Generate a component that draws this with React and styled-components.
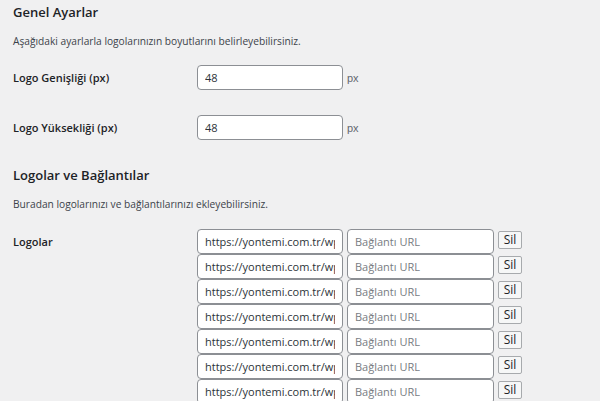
import React from 'react';
import styled, { createGlobalStyle } from 'styled-components';

const Global = createGlobalStyle`
  html, body {
    margin: 0;
    padding: 0;
    background: #f0f0f1;
  }
  body {
    font-family: 'Open Sans', 'Noto Sans', sans-serif;
    color: #1d2327;
    font-size: 10px;
  }
`

const Page = styled.div`
  padding: 2px 13px 0 13px;
`

const Title = styled.h2`
  margin: 0;
  font-size: 13px;
  line-height: 20px;
  font-weight: 600;
  color: #1d2327;
  margin-top: ${p => p.$top || 0}px;
`

const Description = styled.p`
  margin: 11px 0 0 0;
  font-size: 10.2px;
  line-height: 16px;
  color: #3c434a;
`

const Row = styled.div`
  display: flex;
  align-items: center;
  padding: 12px 0 13px 0;
  margin-top: ${p => p.$top || 0}px;
`

const Label = styled.div`
  width: 184px;
  flex-shrink: 0;
  font-size: 11px;
  font-weight: 600;
  color: #1d2327;
`

const Input = styled.input`
  box-sizing: border-box;
  width: ${p => p.$w || 146}px;
  height: 25px;
  margin: 0;
  padding: 0 7px;
  border: 1px solid #8c8f94;
  border-radius: 4px;
  background: #fff;
  font-family: 'Open Sans', 'Noto Sans', sans-serif;
  font-size: 11px;
  color: #2c3338;
  outline: none;
  &::placeholder {
    color: #787c82;
  }
`

const Unit = styled.span`
  margin-left: 4px;
  font-size: 11px;
  color: #646970;
  font-family: 'Liberation Sans', sans-serif;
`

const LogoSection = styled.div`
  display: flex;
  align-items: flex-start;
  margin-top: 17px;
`

const LogoLabel = styled(Label)`
  line-height: 25px;
`

const LogoList = styled.div`
  display: flex;
  flex-direction: column;
`

const LogoRow = styled.div`
  display: flex;
  align-items: flex-start;
  gap: 4px;
  height: 25px;
`

const RemoveButton = styled.button`
  box-sizing: border-box;
  margin-top: 2px;
  width: 24px;
  height: 18px;
  padding: 0;
  border: 1px solid #a7aaad;
  border-radius: 2px;
  background: #f6f7f7;
  font-family: 'Open Sans', 'Noto Sans', sans-serif;
  font-size: 12px;
  line-height: 16px;
  color: #1d2327;
`

const logos = Array.from({ length: 7 }, (_, i) => ({
  id: i,
  src: 'https://yontemi.com.tr/wp-content/uploads/logo-' + (i + 1) + '.png',
}));

const App = () => {
  return (
    <Page>
      <Global />
      <Title>Genel Ayarlar</Title>
      <Description>Aşağıdaki ayarlarla logolarınızın boyutlarını belirleyebilirsiniz.</Description>

      <Row $top={4}>
        <Label>Logo Genişliği (px)</Label>
        <Input defaultValue="48" />
        <Unit>px</Unit>
      </Row>
      <Row>
        <Label>Logo Yüksekliği (px)</Label>
        <Input defaultValue="48" />
        <Unit>px</Unit>
      </Row>

      <Title $top={12}>Logolar ve Bağlantılar</Title>
      <Description>Buradan logolarınızı ve bağlantılarınızı ekleyebilirsiniz.</Description>

      <LogoSection>
        <LogoLabel>Logolar</LogoLabel>
        <LogoList>
          {logos.map(logo => (
            <LogoRow key={logo.id}>
              <Input defaultValue={logo.src} />
              <Input $w={147} placeholder="Bağlantı URL" />
              <RemoveButton>Sil</RemoveButton>
            </LogoRow>
          ))}
        </LogoList>
      </LogoSection>
    </Page>
  )
}

export default App;
